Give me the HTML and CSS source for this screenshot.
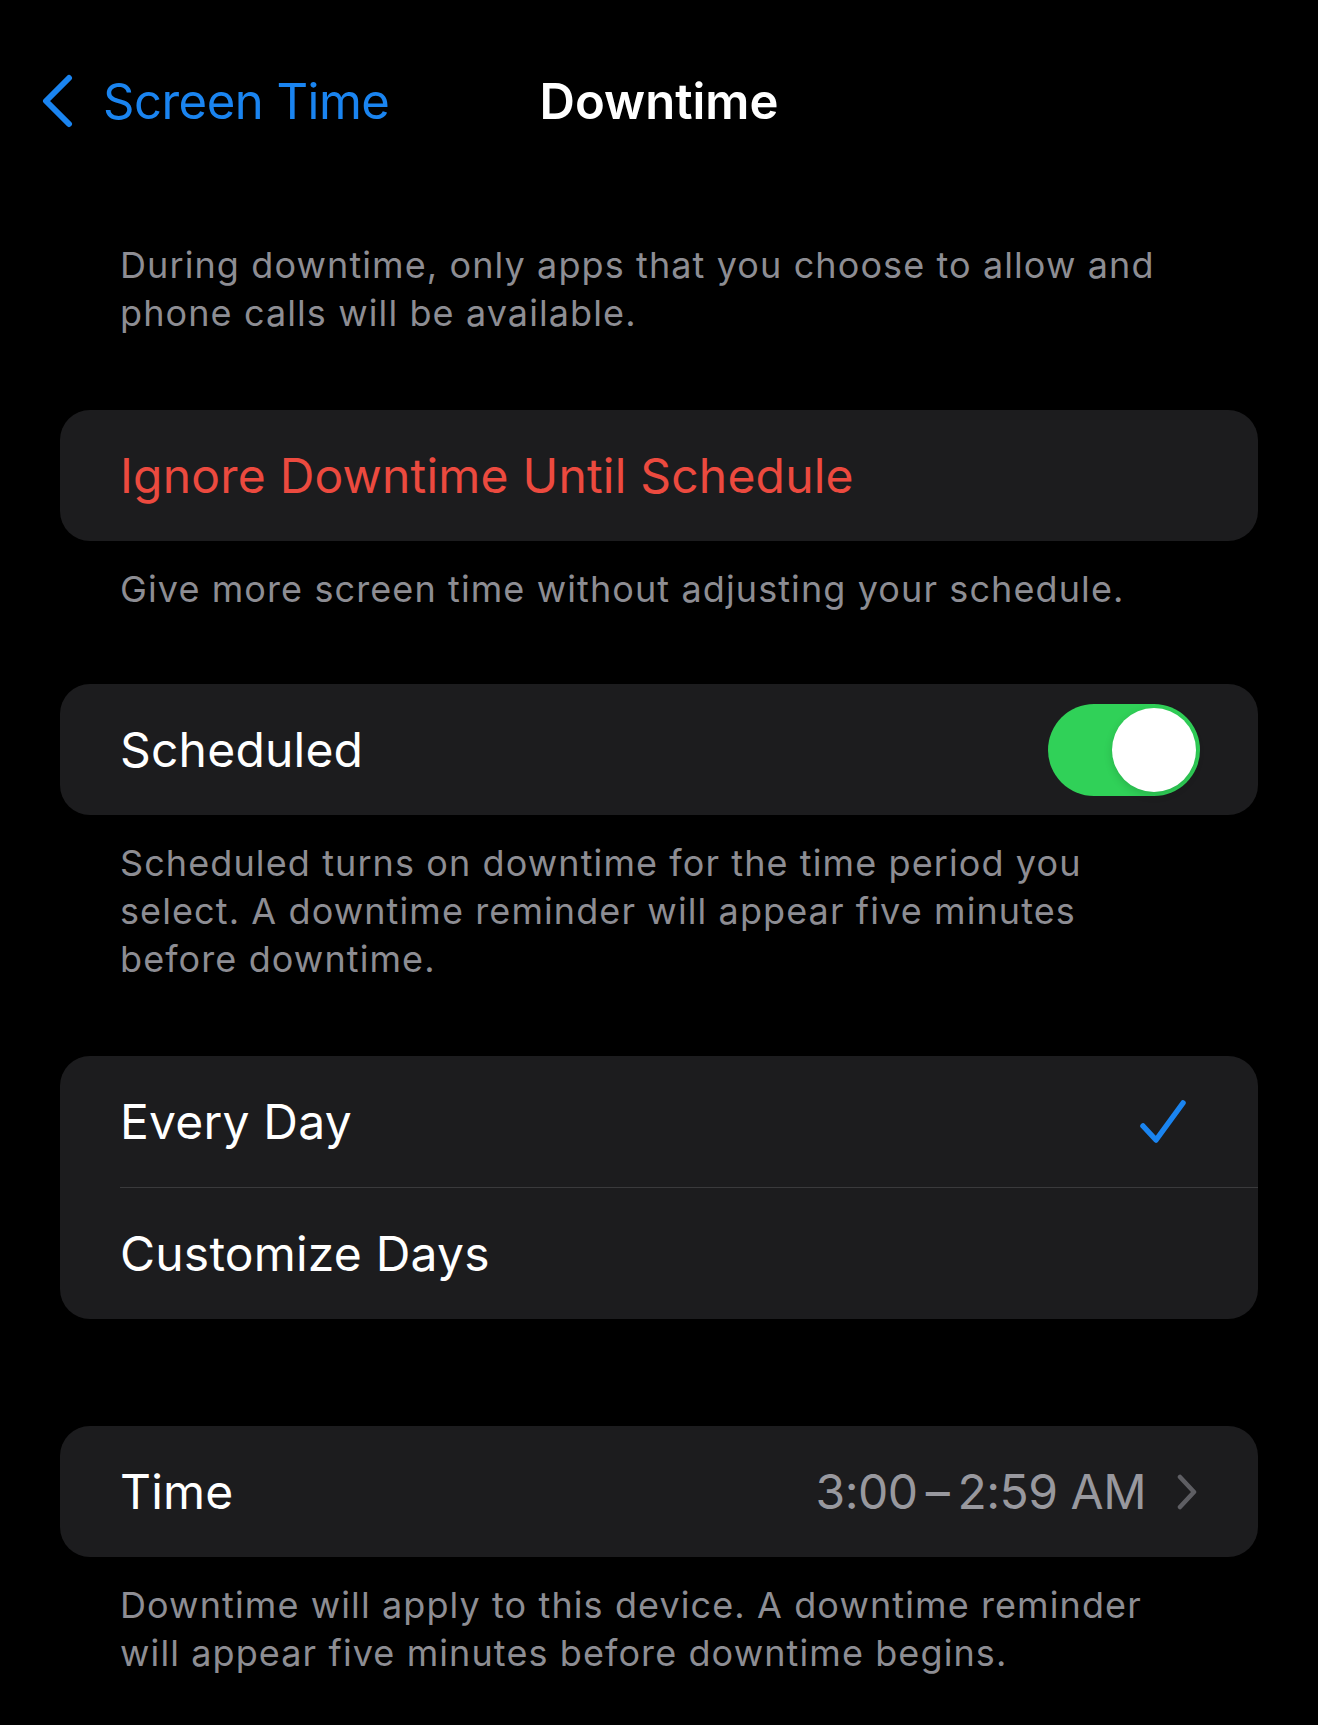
FILE: index.html
```html
<!DOCTYPE html>
<html lang="en">

<head>
	<meta charset="UTF-8">
	<meta name="viewport" content="width=device-width, initial-scale=1.0">
	<title>Downtime</title>
	<link rel="stylesheet" href="styles.css">
</head>

<body>

	<div class="nav">
		<a class="back" href="#">
			<svg class="back-icon" viewBox="0 0 34 54" width="34" height="54">
				<path d="M29 4 L6 27 L29 50" fill="none" stroke="currentColor" stroke-width="6" stroke-linecap="round" stroke-linejoin="round" />
			</svg>
			<span>Screen Time</span>
		</a>
		<h1 class="title">Downtime</h1>
		<div></div>
	</div>

	<p class="note intro">During downtime, only apps that you choose to allow and phone calls will be available.</p>

	<div class="card card-1">
		<div class="row">
			<span class="label danger">Ignore Downtime Until Schedule</span>
		</div>
	</div>
	<p class="note">Give more screen time without adjusting your schedule.</p>

	<div class="card card-2">
		<div class="row">
			<span class="label">Scheduled</span>
			<span class="toggle on"><span class="knob"></span></span>
		</div>
	</div>
	<p class="note">Scheduled turns on downtime for the time period you select. A downtime reminder will appear five minutes before downtime.</p>

	<div class="card card-3">
		<div class="row">
			<span class="label">Every Day</span>
			<svg class="check" viewBox="0 0 48 46" width="48" height="46">
				<path d="M4 27 L17 41 L44 4" fill="none" stroke="currentColor" stroke-width="5.5" stroke-linecap="round" stroke-linejoin="round" />
			</svg>
		</div>
		<div class="row">
			<span class="label">Customize Days</span>
		</div>
	</div>

	<div class="card card-4">
		<div class="row">
			<span class="label">Time</span>
			<span class="value">3:00&thinsp;–&thinsp;2:59 AM
				<svg class="chevron" viewBox="0 0 22 36" width="22" height="36">
					<path d="M4 3 L18 18 L4 33" fill="none" stroke="currentColor" stroke-width="4.5" stroke-linecap="round" stroke-linejoin="round" />
				</svg>
			</span>
		</div>
	</div>
	<p class="note">Downtime will apply to this device. A downtime reminder will appear five minutes before downtime begins.</p>

</body>

</html>
```

FILE: styles.css
```css
*,
*::before,
*::after {
	box-sizing: border-box;
}

body {
	margin: 0;
	padding: 0 60px 0 60px;
	font-family: Inter, "Noto Sans", sans-serif;
	background-color: black;
	color: white;
}

/* navigation bar */
.nav {
	height: 202px;
	margin: 0 -60px;
	display: grid;
	grid-template-columns: 1fr auto 1fr;
	align-items: center;
}

.back {
	display: flex;
	align-items: center;
	gap: 29px;
	padding-left: 40px;
	color: #1a84f0;
	text-decoration: none;
	font-size: 49px;
	letter-spacing: -0.5px;
}

.back-icon {
	display: block;
}

.title {
	margin: 0;
	font-size: 49px;
	font-weight: 600;
}

/* footnotes */
.note {
	margin: 24px 0 0 0;
	padding: 0 60px;
	font-size: 36px;
	line-height: 48px;
	color: #8d8d93;
	letter-spacing: 1.1px;
}

.intro {
	margin-top: 39px;
}

/* grouped cards */
.card {
	background-color: #1c1c1e;
	border-radius: 30px;
	overflow: hidden;
}

.card-1 {
	margin-top: 73px;
}

.card-2 {
	margin-top: 71px;
}

.card-3 {
	margin-top: 73px;
}

.card-4 {
	margin-top: 107px;
}

.row {
	height: 131px;
	display: flex;
	align-items: center;
	justify-content: space-between;
	padding: 0 58px 0 60px;
	font-size: 48px;
}

.card-3 .row + .row {
	border-top: 1.5px solid #3a3a3c;
	margin-left: 60px;
	padding-left: 0;
	height: 132px;
}

.label {
	letter-spacing: 0.2px;
}

.danger {
	color: #ec4a3f;
}

.toggle {
	width: 152px;
	height: 92px;
	border-radius: 46px;
	background-color: #30d158;
	display: flex;
	align-items: center;
	justify-content: flex-end;
	padding: 4px;
}

.knob {
	width: 84px;
	height: 84px;
	border-radius: 50%;
	background-color: white;
	box-shadow: 0 3px 8px rgba(0, 0, 0, 0.15);
}

.check {
	color: #1a84f0;
	margin-right: 13px;
}

.value {
	display: flex;
	align-items: center;
	gap: 30px;
	color: #98989e;
	letter-spacing: -0.5px;
}

.chevron {
	color: #5e5e63;
	margin-right: 2px;
}
```
